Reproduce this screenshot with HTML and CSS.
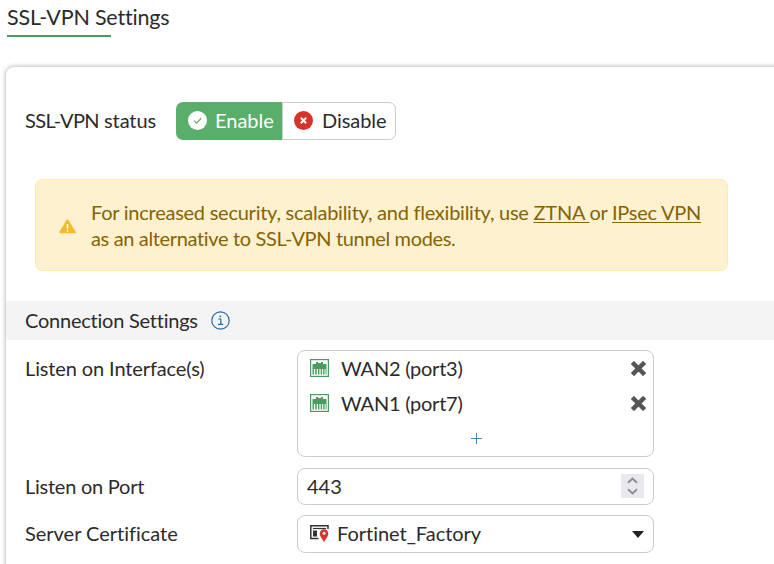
FILE: index.html
```html
<!DOCTYPE html>
<html lang="en">
<head>
<meta charset="utf-8">
<title>SSL-VPN Settings</title>
<link rel="stylesheet" href="styles.css">
</head>
<body>
<svg class="defs" width="0" height="0" aria-hidden="true">
  <symbol id="port" viewBox="0 0 19 18">
    <path fill="#4b9b5f" d="M0 0h19v18H0z"/>
    <path fill="#fff" d="M1.200 1.200h16.600v15.600H1.200z"/>
    <path fill="#4b9b5f" d="M2.500 5H6V3h2v1h3V3h2v2h3.500v5h-14zM2.500 9h1.400v6.500H2.500zM5.200 9h1.500v6.500H5.200zM8 9h1.400v6.500H8zM10.700 9h1.400v6.500h-1.400zM13.200 9h1.400v6.500h-1.400zM15.600 9h.9v6.500h-.9z"/>
  </symbol>
  <symbol id="remove" viewBox="0 0 14 14">
    <path d="M2.300 2.300l9.400 9.400M11.700 2.300l-9.400 9.400" stroke="#555" stroke-width="4.600" stroke-linecap="square" transform="translate(.7 .7) scale(.9)"/>
  </symbol>
</svg>
<header class="page-head"><h1>SSL-VPN Settings</h1></header>
<main class="panel">
  <div class="status">
    <span class="label"><span class="abbr">SSL-VPN</span> status</span>
    <div class="toggle">
      <button class="on"><svg width="19" height="19" viewBox="0 0 19 19"><circle cx="9.5" cy="9.5" r="9.5" fill="#fff"/><path d="M6 9.600l2.500 2.500 4.700-4.800" fill="none" stroke="#5aae6b" stroke-width="1.300"/></svg><span>Enable</span></button>
      <button class="off"><svg width="19" height="19" viewBox="0 0 19 19"><circle cx="9.5" cy="9.5" r="9.5" fill="#d63428"/><path d="M6.800 6.800l5.400 5.400M12.200 6.800l-5.400 5.400" stroke="#fff" stroke-width="2"/></svg><span>Disable</span></button>
    </div>
  </div>
  <div class="alert">
    <svg width="17" height="15" viewBox="0 0 16 15" preserveAspectRatio="none"><path d="M8 1.500L14.800 13.300H1.200z" fill="#f7b92f" stroke="#f7b92f" stroke-width="2" stroke-linejoin="round"/><path d="M8 5v4.800M8 11.200v1.500" stroke="#fff" stroke-width="1.400"/></svg>
    <p>For increased security, scalability, and flexibility, use <a>ZTNA </a>or <a>IPsec VPN</a><br><span class="second">as an alternative to SSL-VPN tunnel modes.</span></p>
  </div>
  <h2 class="section"><span>Connection Settings</span><svg width="19" height="19" viewBox="0 0 19 19" fill="none" stroke="#2268ac"><circle cx="9.5" cy="9.5" r="8.7" stroke-width="1.2"/><path d="M7.300 8h2.500v5.200M7 13.400h5.200" stroke-width="1.200"/><path d="M9.300 4.600v1.600" stroke-width="1.600"/></svg></h2>
  <div class="form">
    <div class="row list-row">
      <span class="label">Listen on Interface(s)</span>
      <div class="box list">
        <div class="item"><svg width="19" height="18"><use href="#port"/></svg><span>WAN2 (port3)</span><svg class="x" width="15" height="15"><use href="#remove"/></svg></div>
        <div class="item"><svg width="19" height="18"><use href="#port"/></svg><span>WAN1 (port7)</span><svg class="x" width="15" height="15"><use href="#remove"/></svg></div>
        <div class="add"><svg width="11" height="11" viewBox="0 0 11 11"><path d="M5.500 0v11M0 5.500h11" stroke="#4d86bd" stroke-width="1"/></svg></div>
      </div>
    </div>
    <div class="row port-row">
      <span class="label">Listen on Port</span>
      <div class="box number"><span>443</span><svg width="23" height="24" viewBox="0 0 23 24"><path fill="#e9e9ed" d="M0 0h23v24H0z"/><path d="M7 8.700l4.500-4.200L16 8.700M7 15.300l4.500 4.200 4.500-4.200" fill="none" stroke="#8b8b98" stroke-width="1.900"/></svg></div>
    </div>
    <div class="row cert-row">
      <span class="label">Server Certificate</span>
      <div class="box select"><svg width="19" height="17" viewBox="0 0 19 17"><path d="M18 4V.8H.8v12.700H8.500" fill="none" stroke="#333" stroke-width="1.500"/><path d="M3 3.500h13" stroke="#333" stroke-width="1.200"/><path d="M3 5.500h4v6H3z" fill="#333"/><path d="M14 17C11.500 13.200 9.700 11 9.700 8.600a4.300 4.300 0 0 1 8.600 0c0 2.400-1.800 4.600-4.300 8.400z" fill="#dc3328"/><circle cx="14" cy="8.300" r="1.500" fill="#fff"/></svg><span>Fortinet_Factory</span><svg class="caret" width="12" height="7" viewBox="0 0 12 7"><path d="M0 0h12L6 7z" fill="#222"/></svg></div>
    </div>
  </div>
</main>
</body>
</html>
```
FILE: styles.css
```css
* { box-sizing: border-box; }
body {
  margin: 0;
  height: 564px;
  overflow: hidden;
  background: #fff;
  color: #2b2b2b;
  font: 20px/26px Lato, "Liberation Sans", sans-serif;
}
.defs { display: block; }
h1, h2, p { margin: 0; font: inherit; }
svg { flex: none; display: block; }
.page-head { height: 67px; padding: 5px 0 0 7px; }
.page-head h1 { height: 32px; font-size: 21.5px; line-height: 24px; letter-spacing: -.2px; }
.page-head h1::after {
  content: "";
  display: block;
  width: 104px;
  height: 2px;
  margin-top: 6px;
  background: #459c60;
}
.panel {
  height: 520px;
  margin: 0 -20px 0 6px;
  padding-top: 35px;
  border-radius: 8px;
  box-shadow: 0 0 5px rgba(0, 0, 0, .36);
}
.status { display: flex; align-items: center; height: 38px; padding-left: 19px; }
.status .label { width: 151px; padding-bottom: 2px; letter-spacing: -.1px; }
.status .abbr { letter-spacing: -.6px; }
.toggle { display: flex; width: 220px; height: 38px; }
.toggle button {
  display: flex;
  align-items: center;
  border: 0;
  padding: 0;
  background: none;
  color: inherit;
  font: inherit;
}
.toggle button span { margin-left: 8px; padding-bottom: 2px; }
.toggle button svg { margin-top: -1px; }
.toggle .on {
  width: 106px;
  padding-left: 12px;
  border-radius: 7px 0 0 7px;
  background: #5aae6b;
  color: #fff;
}
.toggle .off {
  width: 114px;
  padding-left: 11px;
  border: 1px solid #ccc;
  border-radius: 0 7px 7px 0;
}
.toggle .off span { margin-left: 9px; letter-spacing: -.05px; }
.alert {
  display: flex;
  align-items: center;
  width: 693px;
  height: 92px;
  margin: 39px 0 30px 29px;
  padding-left: 23px;
  border: 1px solid #fdebb5;
  border-radius: 7px;
  background: #fef1cf;
  color: #856404;
}
.alert svg { margin-top: 2px; }
.alert p { margin-left: 15px; white-space: nowrap; letter-spacing: -.25px; }
.alert .second { letter-spacing: -.35px; }
.alert a { text-decoration: underline 1px; text-underline-offset: 2px; }
.section {
  display: flex;
  align-items: center;
  height: 39px;
  padding-left: 19px;
  background: #f4f4f4;
}
.section span { padding-bottom: 2px; letter-spacing: -.23px; }
.section svg { margin: -1px 0 0 13px; }
.form { padding: 10px 0 0 19px; }
.row { display: flex; align-items: center; }
.row .label { width: 272px; padding-bottom: 2px; letter-spacing: -.02px; }
.list-row { align-items: flex-start; }
.list-row .label { padding-top: 5px; letter-spacing: -.12px; }
.port-row { margin-top: 11px; }
.port-row .label { letter-spacing: -.25px; }
.cert-row { margin-top: 10px; }
.box { width: 357px; border: 1px solid #ccc; border-radius: 8px; }
.list { height: 107px; }
.item { display: flex; align-items: center; height: 35px; padding: 0 7px 0 12px; }
.item span { margin-left: 12px; padding-bottom: 2px; letter-spacing: -.25px; }
.item svg { margin-top: -1px; }
.item .x { margin-left: auto; }
.add { display: flex; justify-content: center; padding: 12px 0 0 1px; }
.number, .select { display: flex; align-items: center; }
.number { height: 37px; padding: 0 9px; }
.number svg { margin: -1px 0 0 auto; }
.number span, .select span { padding-bottom: 2px; }
.select { height: 38px; padding: 0 9px 0 12px; }
.select span { margin-left: 8px; letter-spacing: -.02px; }
.select svg { margin-top: -1px; }
.select .caret { margin: 1px 0 0 auto; }
```
